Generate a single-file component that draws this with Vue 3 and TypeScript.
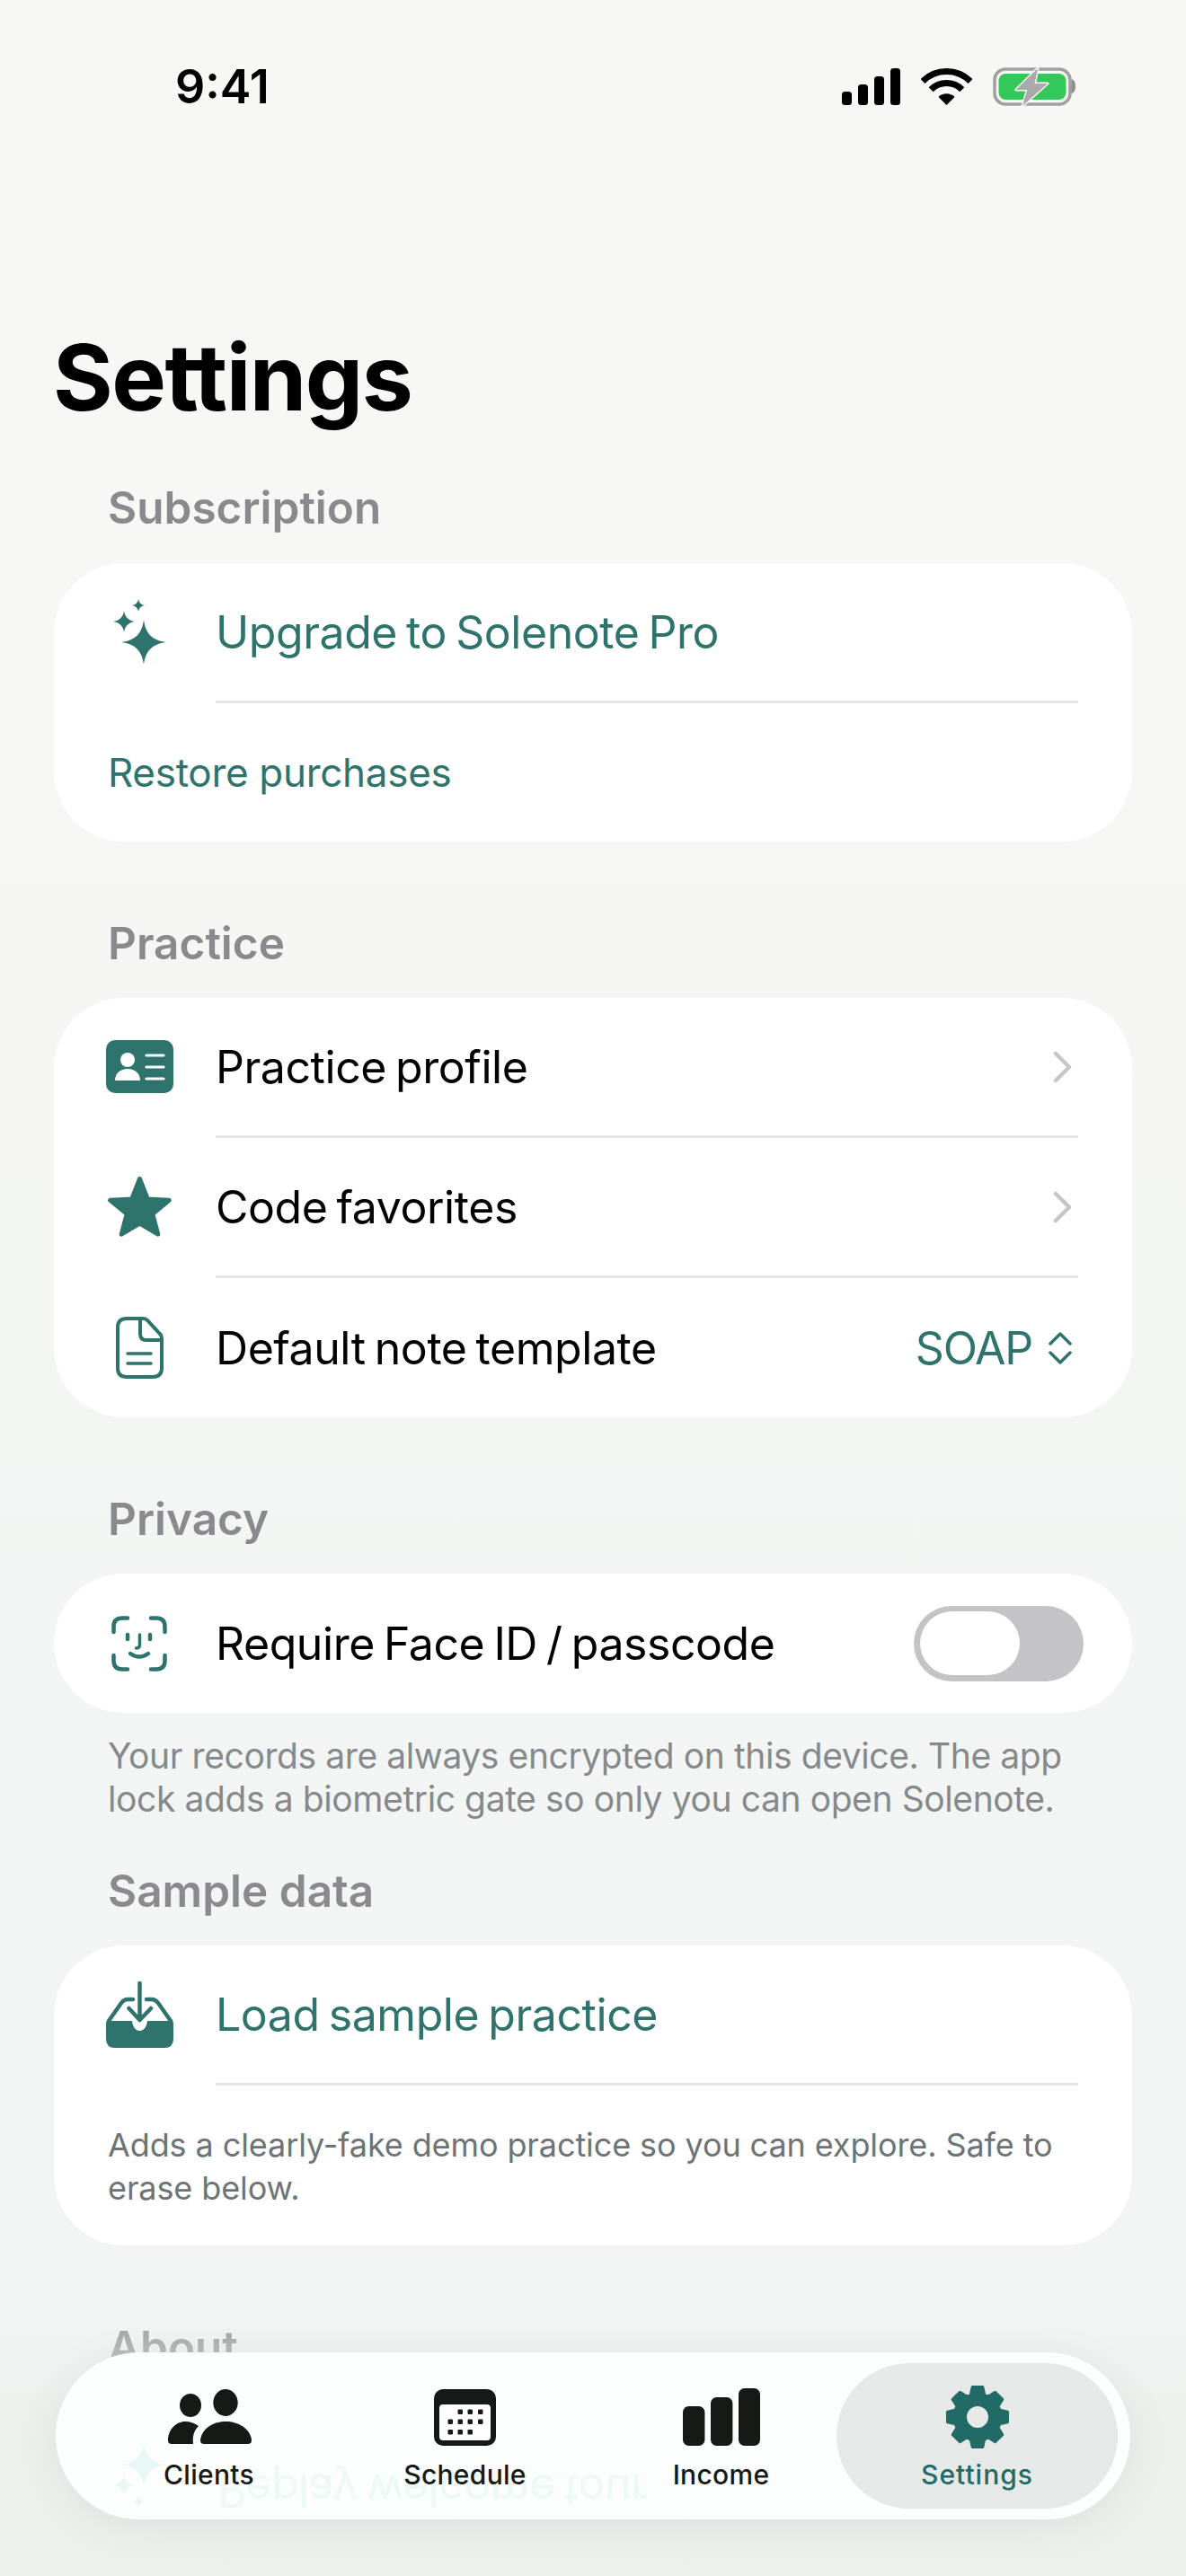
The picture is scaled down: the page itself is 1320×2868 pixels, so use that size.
<template>
  <div class="page">
    <div class="status-bar">
      <span class="clock">9:41</span>
      <div class="status-icons">
        <svg class="signal" width="65" height="41" viewBox="0 0 65 41">
          <rect x="0" y="26" width="11" height="15" rx="3.5" />
          <rect x="18" y="18" width="11" height="23" rx="3.5" />
          <rect x="36" y="9" width="11" height="32" rx="3.5" />
          <rect x="54" y="0" width="11" height="41" rx="3.5" />
        </svg>
        <svg class="wifi" width="57" height="41" viewBox="0 0 57 41">
          <path d="M28.5 41 L19.5 32 A12.7 12.7 0 0 1 37.5 32 Z" fill="#000" />
          <path d="M11.2 23.7 A24.5 24.5 0 0 1 45.8 23.7" fill="none" stroke="#000" stroke-width="7" />
          <path d="M2 14.5 A37.5 37.5 0 0 1 55 14.5" fill="none" stroke="#000" stroke-width="7" />
        </svg>
        <svg class="battery" width="92" height="44" viewBox="0 0 92 44">
          <rect x="2" y="2" width="84" height="39" rx="12" fill="none" stroke="#a0a0a0" stroke-width="3.5" />
          <rect x="6.5" y="7" width="75" height="29" rx="8" fill="#34c759" />
          <path d="M87.5 13 Q92 14 92 21 Q92 28 87.5 29 Z" fill="#8e8e8e" />
          <path d="M50 1 L25.7 25 H38.3 L33 43 L61 18 H46.7 Z" fill="#aaaaaa" stroke="#f7f7f5" stroke-width="3" stroke-linejoin="round" paint-order="stroke" />
        </svg>
      </div>
    </div>

    <h1 class="title">Settings</h1>

    <section class="first">
      <h2 class="section-label">Subscription</h2>
      <div class="card">
        <div class="row row-top">
          <div class="row-icon">
            <svg width="59" height="73" viewBox="0 0 59 73" fill="#2f736d">
              <path d="M34 23 C36 38 43 46 59 48 C43 50 36 58 34 73 C32 58 25 50 9 48 C25 46 32 38 34 23Z" />
              <path d="M12 13 C13 20 17 24 24 25 C17 26 13 30 12 37 C11 30 7 26 0 25 C7 24 11 20 12 13Z" />
              <path d="M28 0 C28.6 4 31 6.4 35 7 C31 7.6 28.6 10 28 14 C27.4 10 25 7.6 21 7 C25 6.4 27.4 4 28 0Z" />
            </svg>
          </div>
          <span class="row-text teal">Upgrade to Solenote Pro</span>
        </div>
        <div class="separator"></div>
        <div class="row row-restore">
          <span class="restore">Restore purchases</span>
        </div>
      </div>
    </section>

    <section>
      <h2 class="section-label">Practice</h2>
      <div class="card">
        <div class="row row-top">
          <div class="row-icon">
            <svg width="75" height="59" viewBox="0 0 75 59">
              <rect width="75" height="59" rx="10" fill="#2f736d" />
              <circle cx="24" cy="22" r="8" fill="#fff" />
              <path d="M10 45 C10 37 16 32 24 32 C32 32 38 37 38 45 Z" fill="#fff" />
              <path d="M45 17 H64 M45 30 H64 M45 43 H64" stroke="#fff" stroke-width="3.2" stroke-linecap="round" />
            </svg>
          </div>
          <span class="row-text">Practice profile</span>
          <svg class="chevron" width="21" height="36" viewBox="0 0 21 36">
            <path d="M3 3 L18 18 L3 33" />
          </svg>
        </div>
        <div class="separator"></div>
        <div class="row row-top">
          <div class="row-icon">
            <svg width="71" height="67" viewBox="0 0 71 67">
              <path
                d="M35.5 2.5 L44.3 24.9 L68.3 26.3 L49.8 41.6 L55.8 64.2 L35.5 52 L15.2 64.2 L21.2 41.6 L2.7 26.3 L26.7 24.9 Z"
                fill="#2f736d"
                stroke="#2f736d"
                stroke-width="5"
                stroke-linejoin="round"
              />
            </svg>
          </div>
          <span class="row-text">Code favorites</span>
          <svg class="chevron" width="21" height="36" viewBox="0 0 21 36">
            <path d="M3 3 L18 18 L3 33" />
          </svg>
        </div>
        <div class="separator"></div>
        <div class="row row-plain">
          <div class="row-icon">
            <svg width="53" height="69" viewBox="0 0 53 69" fill="none" stroke="#2f736d" stroke-width="4">
              <path d="M12 2 H31 Q33 2 35 4 L49 19 Q51 21 51 24 V57 Q51 67 41 67 H12 Q2 67 2 57 V12 Q2 2 12 2Z" />
              <path d="M27 2 V19 Q27 26 34 26 H51" />
              <path d="M13 41 H39 M13 52 H39" stroke-width="3.5" stroke-linecap="round" />
            </svg>
          </div>
          <span class="row-text">Default note template</span>
          <span class="picker">SOAP</span>
          <svg class="updown" width="26" height="38" viewBox="0 0 26 38">
            <path d="M2 14 L13 3 L24 14 M2 24 L13 35 L24 24" />
          </svg>
        </div>
      </div>
    </section>

    <section>
      <h2 class="section-label">Privacy</h2>
      <div class="card">
        <div class="row row-plain">
          <div class="row-icon">
            <svg width="62" height="62" viewBox="0 0 62 62" fill="none" stroke="#2f736d" stroke-width="4.5" stroke-linecap="round">
              <path d="M2.5 18 V12 Q2.5 2.5 12 2.5 H18" />
              <path d="M44 2.5 H50 Q59.5 2.5 59.5 12 V18" />
              <path d="M2.5 44 V50 Q2.5 59.5 12 59.5 H18" />
              <path d="M44 59.5 H50 Q59.5 59.5 59.5 50 V44" />
              <path d="M18 21 V26 M43 21 V26" />
              <path d="M31.5 21 V32 Q31.5 36 27.5 36" stroke-width="3.5" />
              <path d="M21 42 Q31 49 41 42" />
            </svg>
          </div>
          <span class="row-text">Require Face ID / passcode</span>
          <div class="toggle">
            <div class="toggle-thumb"></div>
          </div>
        </div>
      </div>
      <p class="footnote">
        Your records are always encrypted on this device. The app lock adds a biometric gate so only you can open Solenote.
      </p>
    </section>

    <section class="after-note">
      <h2 class="section-label">Sample data</h2>
      <div class="card">
        <div class="row row-top">
          <div class="row-icon">
            <svg width="75" height="74" viewBox="0 0 75 74">
              <path
                d="M2 44 H29 C30 51 33 55 37.5 55 C42 55 45 51 46 44 H73 Q75 44 75 47 V64 Q75 74 65 74 H10 Q0 74 0 64 V47 Q0 44 2 44Z"
                fill="#2f736d"
              />
              <path
                d="M3 44 L17 24 Q20 20 24 20 H30 M45 20 H51 Q55 20 58 24 L72 44 M37.5 2 V42 M25.5 30 L37.5 43 L50 30"
                fill="none"
                stroke="#2f736d"
                stroke-width="4.5"
                stroke-linecap="round"
                stroke-linejoin="round"
              />
            </svg>
          </div>
          <span class="row-text teal">Load sample practice</span>
        </div>
        <div class="separator"></div>
        <p class="card-note">Adds a clearly-fake demo practice so you can explore. Safe to erase below.</p>
      </div>
    </section>

    <section>
      <h2 class="section-label">About</h2>
      <div class="card about-card">
        <div class="row about-row"></div>
        <div class="separator"></div>
      </div>
    </section>

    <div class="bottom-fade"></div>

    <nav class="tab-bar">
      <svg class="ghost-icon" width="59" height="73" viewBox="0 0 59 73" fill="#e8f8f5">
        <path d="M34 23 C36 38 43 46 59 48 C43 50 36 58 34 73 C32 58 25 50 9 48 C25 46 32 38 34 23Z" />
        <path d="M12 13 C13 20 17 24 24 25 C17 26 13 30 12 37 C11 30 7 26 0 25 C7 24 11 20 12 13Z" />
        <path d="M28 0 C28.6 4 31 6.4 35 7 C31 7.6 28.6 10 28 14 C27.4 10 25 7.6 21 7 C25 6.4 27.4 4 28 0Z" />
      </svg>
      <span class="ghost-text">Replay welcome tour</span>

      <div class="tab">
        <div class="tab-icon">
          <svg width="94" height="62" viewBox="0 0 94 62" fill="#161a17">
            <ellipse cx="26" cy="18" rx="12" ry="13" />
            <ellipse cx="65" cy="15" rx="13.7" ry="15" />
            <path d="M1 57 C1 45 10 36 20 36 C26 36 31 38 35 41 C30 46 28 52 29 61 L5 61 Q1 61 1 57Z" />
            <path d="M41 61 Q37 61 37 57 C38 45 50 36 65 36 C80 36 93 45 94 57 Q94 61 90 61Z" />
          </svg>
        </div>
        <span class="tab-label">Clients</span>
      </div>
      <div class="tab">
        <div class="tab-icon">
          <svg width="69" height="63" viewBox="0 0 69 63">
            <rect width="69" height="63" rx="10" fill="#161a17" />
            <rect x="6" y="17" width="57" height="40" rx="4" fill="#fff" />
            <g fill="#161a17">
              <rect v-for="d in calendarDots" :key="d.join()" :x="d[0]" :y="d[1]" width="5.5" height="5.5" rx="1.2" />
            </g>
          </svg>
        </div>
        <span class="tab-label">Schedule</span>
      </div>
      <div class="tab">
        <div class="tab-icon">
          <svg width="86" height="64" viewBox="0 0 86 64" fill="#161a17">
            <rect x="0" y="20" width="24.4" height="44" rx="6.5" />
            <rect x="31" y="10" width="24.4" height="54" rx="6.5" />
            <rect x="62" y="0" width="24" height="64" rx="6.5" />
          </svg>
        </div>
        <span class="tab-label">Income</span>
      </div>
      <div class="tab tab-active">
        <div class="tab-icon">
          <svg width="72" height="72" viewBox="0 0 72 72">
            <path :d="gearPath" fill="#226a65" stroke="#226a65" stroke-width="3" stroke-linejoin="round" fill-rule="evenodd" />
          </svg>
        </div>
        <span class="tab-label">Settings</span>
      </div>
    </nav>
  </div>
</template>

<script setup lang="ts">
const calendarCols = [15.5, 26.5, 37.5, 49]
const calendarDots: number[][] = [
  ...calendarCols.slice(1).map((x) => [x, 22.5]),
  ...calendarCols.map((x) => [x, 33.5]),
  ...calendarCols.slice(0, 3).map((x) => [x, 45]),
]

// 8-tooth gear, with the hole cut out by evenodd
function buildGear(): string {
  const cx = 36
  const cy = 36
  const pts: string[] = []
  for (let i = 0; i < 8; i++) {
    const a = (i * Math.PI) / 4 - Math.PI / 2
    const angles: [number, number][] = [
      [a - 0.3, 26],
      [a - 0.17, 34],
      [a + 0.17, 34],
      [a + 0.3, 26],
    ]
    for (const [t, r] of angles) {
      pts.push(`${(cx + r * Math.cos(t)).toFixed(1)} ${(cy + r * Math.sin(t)).toFixed(1)}`)
    }
  }
  const hole = "M49.5 36 A13.5 13.5 0 1 0 22.5 36 A13.5 13.5 0 1 0 49.5 36Z"
  return `M${pts.join(" L")}Z ${hole}`
}

const gearPath = buildGear()
</script>

<style>
html,
body {
  margin: 0;
  background: #f5f6f4;
}
</style>

<style scoped>
.page {
  position: relative;
  width: 1320px;
  height: 2868px;
  overflow: hidden;
  font-family: Inter, "Noto Sans", sans-serif;
  color: #000;
  background: linear-gradient(180deg, #f7f7f5 0%, #f7f7f5 20%, #f2f5f3 70%, #f2f5f3 100%);
}

.status-bar {
  display: flex;
  justify-content: space-between;
  align-items: flex-start;
  height: 75px;
  padding: 71px 123px 0 195px;
}

.clock {
  font-size: 52px;
  font-weight: 600;
  line-height: 52px;
}

.status-icons {
  display: flex;
  align-items: flex-start;
  gap: 23px;
  padding-top: 5px;
}

.signal {
  fill: #000;
}

.battery {
  margin-top: -1px;
}

.title {
  margin: 212px 0 0;
  padding-left: 59px;
  height: 124px;
  font-size: 102px;
  font-weight: 700;
  line-height: 124px;
  letter-spacing: -1.5px;
}

section {
  margin: 83px 60px 0;
}

section.first {
  margin-top: 0;
  padding-top: 53px;
}

section.first .section-label {
  margin-bottom: 32px;
}

section.after-note {
  margin-top: 48px;
}

.section-label {
  margin: 0 0 31px 60px;
  font-size: 49.5px;
  font-weight: 600;
  line-height: 60px;
  color: #8a8a8e;
}

.card {
  background: #fff;
  border-radius: 78px;
}

.row {
  display: flex;
  align-items: center;
  padding: 0 67px 0 35px;
}

.row-top {
  height: 153px;
}

.row-plain {
  height: 155px;
}

.row-restore {
  height: 154px;
}

.about-row {
  height: 158px;
}

.row-icon {
  display: flex;
  justify-content: center;
  align-items: center;
  flex: none;
  width: 120px;
  margin-right: 25px;
}

.row-text {
  flex: 1;
  font-size: 50px;
  line-height: 60px;
  letter-spacing: -0.45px;
  word-spacing: -3.5px;
}

.teal {
  color: #2f736d;
}

.restore {
  margin-left: 25px;
  font-size: 44px;
  line-height: 60px;
  letter-spacing: -0.3px;
  color: #2f736d;
}

.separator {
  height: 3px;
  margin: 0 60px 0 180px;
  background: #e6e6e8;
}

.chevron {
  fill: none;
  stroke: #c6c6c8;
  stroke-width: 4.5;
  stroke-linecap: round;
  stroke-linejoin: round;
}

.picker {
  margin-right: 18px;
  font-size: 50px;
  line-height: 60px;
  letter-spacing: -1.2px;
  color: #2f736d;
}

.updown {
  fill: none;
  stroke: #2f736d;
  stroke-width: 3.5;
  stroke-linecap: round;
  stroke-linejoin: round;
}

.toggle {
  flex: none;
  box-sizing: border-box;
  width: 189px;
  height: 84px;
  margin-right: -13px;
  padding: 6.5px;
  border-radius: 42px;
  background: #c4c4c7;
}

.toggle-thumb {
  width: 111px;
  height: 71px;
  border-radius: 36px;
  background: #fff;
}

.footnote {
  margin: 24px 0 0 60px;
  width: 1090px;
  font-size: 39px;
  line-height: 48px;
  letter-spacing: -0.4px;
  color: #85898b;
}

.card-note {
  margin: 0;
  padding: 42px 60px 40px;
  font-size: 36px;
  line-height: 48px;
  letter-spacing: -0.1px;
  color: #6c7476;
}

.bottom-fade {
  position: absolute;
  left: 0;
  right: 0;
  top: 2500px;
  bottom: 0;
  background: linear-gradient(180deg, rgba(238, 240, 238, 0) 0%, rgba(238, 240, 238, 0.28) 25%, rgba(238, 240, 238, 0.96) 50%, rgba(238, 240, 238, 0.96) 100%);
}

.tab-bar {
  position: absolute;
  left: 62px;
  top: 2619px;
  display: grid;
  grid-template-columns: 285px 285px 285px 313px;
  box-sizing: border-box;
  width: 1196px;
  height: 186px;
  padding: 12px 0 12px 28px;
  overflow: hidden;
  border-radius: 93px;
  background: #fbfefd;
  box-shadow: 0 8px 50px rgba(0, 0, 0, 0.07);
}

.ghost-text {
  position: absolute;
  left: 180px;
  top: 124px;
  font-size: 50px;
  line-height: 60px;
  letter-spacing: -0.45px;
  word-spacing: -3.5px;
  color: #ecf9f7;
  transform: scaleY(-1);
}

.ghost-icon {
  position: absolute;
  left: 64px;
  top: 100px;
  transform: scaleY(-1);
}

.tab {
  position: relative;
  display: flex;
  flex-direction: column;
  align-items: center;
  height: 162px;
  border-radius: 81px;
}

.tab-active {
  width: 313px;
  margin-left: -14px;
  background: #e6e9e7;
}

.tab-icon {
  display: flex;
  align-items: center;
  justify-content: center;
  height: 72px;
  margin-top: 24px;
}

.tab-label {
  margin-top: 8px;
  font-size: 30px;
  font-weight: 500;
  line-height: 40px;
  letter-spacing: 0.3px;
  color: #161a17;
}

.tab-active .tab-label {
  color: #226a65;
  letter-spacing: 1px;
}
</style>
